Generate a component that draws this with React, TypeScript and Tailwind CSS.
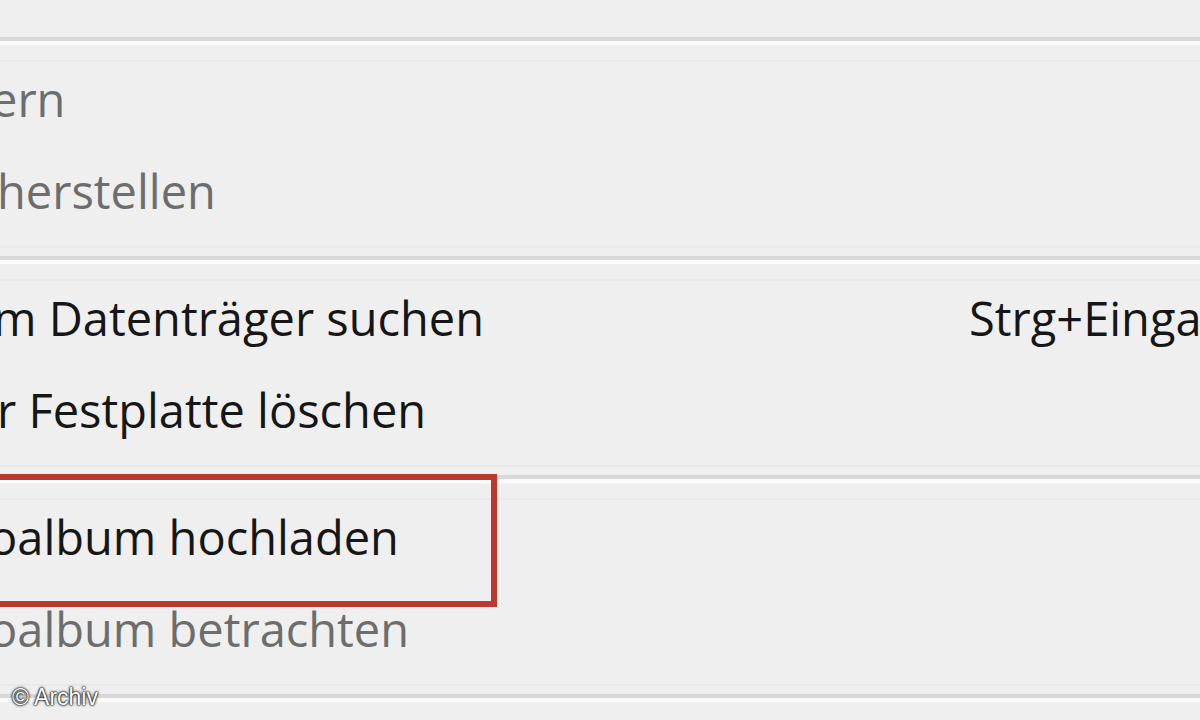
import React from "react";

type Item = { hidden: string; visible: string; shift: number; disabled?: boolean; shortcut?: string };

const groups: Item[][] = [
  [
    { hidden: "Speich", visible: "ern", shift: -9, disabled: true },
    { hidden: "Wieder", visible: "herstellen", shift: -3, disabled: true },
  ],
  [
    { hidden: "Auf de", visible: "m Datenträger suchen", shift: -7, shortcut: "Strg+Eingabe" },
    { hidden: "Von de", visible: "r Festplatte löschen", shift: -3 },
  ],
  [
    { hidden: "In Onlinefot", visible: "oalbum hochladen", shift: -11 },
    { hidden: "In Onlinefot", visible: "oalbum betrachten", shift: -11, disabled: true },
  ],
];

function Separator() {
  return (
    <div className="flex flex-col">
      <div className="h-[4px] bg-[#d8d8d8]" />
      <div className="h-[4px] bg-[#fbfbfb]" />
    </div>
  );
}

function Row({ item }: { item: Item }) {
  const color = item.disabled ? "text-[#6d6d6d]" : "text-[#161616]";
  return (
    <div className={`grid grid-cols-[969px_1fr] h-[92px] ${color}`}>
      <div className="pt-[14px] leading-none whitespace-nowrap">
        <span className="relative inline-block" style={{ marginLeft: item.shift }}>
          <span className="absolute right-full top-0">{item.hidden}</span>
          {item.visible}
        </span>
      </div>
      <div className="pt-[14px] leading-none whitespace-nowrap">{item.shortcut ?? ""}</div>
    </div>
  );
}

function Group({ items }: { items: Item[] }) {
  return (
    <div className="flex flex-col pt-[15px] pb-[8px]">
      <div className="h-[2px] bg-[#e9e9e9]" />
      {items.map((it, i) => (
        <Row key={i} item={it} />
      ))}
      <div className="h-[2px] bg-[#e9e9e9]" />
    </div>
  );
}

export default function App() {
  return (
    <div
      className="relative w-[1200px] h-[720px] overflow-hidden bg-[#efefef] text-[47px]"
      style={{ fontFamily: '"Open Sans", "Noto Sans", sans-serif' }}
    >
      <div className="h-[37px]" />
      {groups.map((g, i) => (
        <React.Fragment key={i}>
          <Separator />
          <Group items={g} />
        </React.Fragment>
      ))}
      <Separator />

      <div className="absolute left-[-12px] top-[474px] w-[509px] h-[133px] border-[6px] border-[#bd392e]" />

      <div
        className="absolute left-[12px] top-[686px] text-[23px] leading-none text-white"
        style={{
          fontFamily: '"Liberation Sans", Arial, sans-serif',
          textShadow: "0 0 3px #000, 0 0 2px #000, 0 0 1px #333",
        }}
      >
        © Archiv
      </div>
    </div>
  );
}
